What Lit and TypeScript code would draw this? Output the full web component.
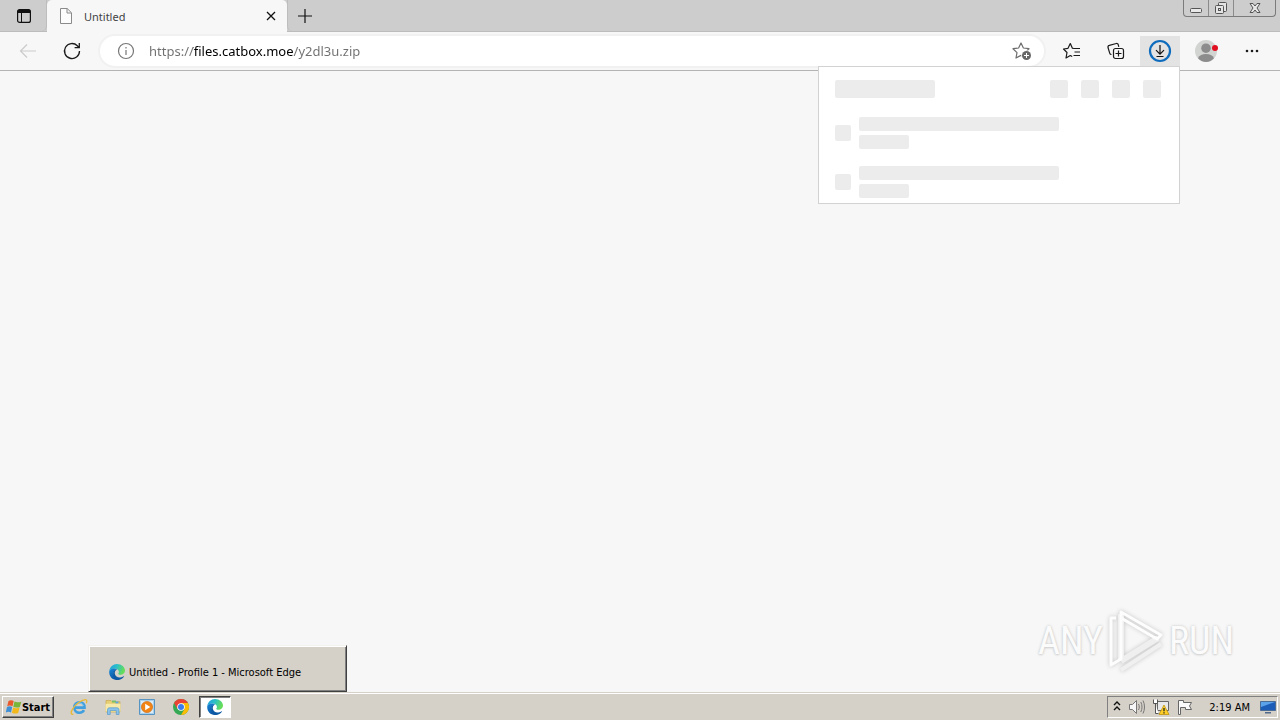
import { LitElement, html, css } from "lit";
import { customElement } from "lit/decorators.js";

const edgeLogo = (id: string) => html`<svg class="i16" viewBox="0 0 16 16" aria-hidden="true">
  <defs>
    <linearGradient id="${id}a" x1="0" y1="0" x2="1" y2="0.3">
      <stop offset="0" stop-color="#1f9be0" /><stop offset="0.5" stop-color="#2bc0c8" /><stop offset="1" stop-color="#66dd58" />
    </linearGradient>
    <linearGradient id="${id}b" x1="0" y1="0" x2="0.6" y2="1">
      <stop offset="0" stop-color="#1788d8" /><stop offset="1" stop-color="#0b4f9e" />
    </linearGradient>
  </defs>
  <path fill="url(#${id}a)" d="M.3 7C.8 3 4 0 8 0c4.600 0 8 3.200 8 6.600 0 2.500-2 4.200-4.300 4.200-1.700 0-2.500-.6-2.500-1 0-.4.7-.7.7-1.900C9.900 6 8 4.600 5.600 4.600 3.200 4.600 1.200 5.600.3 7z" />
  <path fill="url(#${id}b)" d="M.2 8.200C.2 6 2.600 4.600 5.600 4.600c1 0 2 .3 2.700.7C6 5.500 4.600 7.500 4.600 9.400c0 3.400 3.400 5.600 6.500 5 -1 .9-2 1.400-3.200 1.500C3.600 16 .2 12.500.2 8.200z" />
  <path fill="#0c59a4" d="M8 5.500C6.200 6.400 5.600 8 5.800 9.700c.4 2.700 3 4 5.500 3.700 1.400-.2 2.700-.7 3.500-1.200.3-.1.4.1.3.3-1.500 2.400-4 3.500-6.500 3.400C5 15.200 4 12 4.200 9.400 4.400 7 6 5.500 8 5.500z" />
</svg>`;

const taskIcons = {
  ie: html`<svg class="i18" viewBox="0 0 18 18" aria-hidden="true">
    <path fill="none" stroke="#3f9fdf" stroke-width="2.600" d="M4.200 9.600h10.300c0-3.300-2-5.300-5-5.300-3 0-5.200 2.200-5.200 5.200 0 3 2.200 5.200 5.200 5.200 2 0 3.600-.9 4.500-2.500" />
    <path fill="none" stroke="#8fd0f5" stroke-width=".8" d="M5 8.300c.5-2 2.200-3.300 4.300-3.300s3.600 1 4.200 2.800" />
    <path fill="none" stroke="#e8b935" stroke-width="1.300" d="M3.400 16.200C.6 17 .4 14 3 10.500 6 6 12 1.500 15.400 1.600c1.800.1 1.700 1.900.9 3.600" />
  </svg>`,
  folder: html`<svg class="i18" viewBox="0 0 18 18" aria-hidden="true">
    <path fill="#e8cf74" stroke="#c9a94a" stroke-width=".7" d="M2 2.500h5l1 1.200h8V14H2z" />
    <path fill="#79c267" d="M8 2.500h4v2H8z" /><path fill="#5fa7dd" d="M11.500 3.500h3v2h-3z" />
    <path fill="#f7e9a8" d="M1.500 5.800h15V13.500h-15z" />
    <path fill="#8cc3ea" stroke="#5799cb" stroke-width=".7" d="M3.500 16.500v-4.700c0-1.300.7-2 2-2h7.500c1.300 0 2 .7 2 2v4.700h-2.700v-4H6.200v4z" />
  </svg>`,
  player: html`<svg class="i18" viewBox="0 0 18 18" aria-hidden="true">
    <path fill="#a9d0ec" stroke="#5794c1" d="M1.500 1.500h15v15h-15z" /><path fill="#d9ecf8" d="M3 3h12v12H3z" />
    <circle cx="9" cy="9" r="5.600" fill="#f28416" stroke="#c9670d" stroke-width=".6" /><path fill="#fff" d="M7.200 5.800v6.400L12.300 9z" />
  </svg>`,
  chrome: html`<svg class="i16" viewBox="0 0 16 16" aria-hidden="true">
    <circle cx="8" cy="8" r="8" fill="#34a853" />
    <path fill="#fbbc05" d="M8 16a8 8 0 0 0 6.930-12H8l3.500 6z" />
    <path fill="#ea4335" d="M1.070 4A8 8 0 0 1 14.930 4H8L4.500 10z" />
    <circle cx="8" cy="8" r="3.800" fill="#fff" /><circle cx="8" cy="8" r="3" fill="#3b7ded" />
  </svg>`,
};

@customElement("download-flyout")
class DownloadFlyout extends LitElement {
  static styles = css`
    :host { display: block; box-sizing: border-box; background: #fff; border: 1px solid #d2d2d2; padding: 13px 18px 5px 16px; }
    .bar { background: #ececec; border-radius: 2px; }
    .head { display: flex; align-items: center; height: 18px; gap: 13px; margin-bottom: 19px; }
    .title { width: 100px; height: 18px; margin-right: auto; }
    .tool { width: 18px; height: 18px; }
    .row { display: flex; align-items: center; gap: 8px; height: 32px; }
    .row + .row { margin-top: 17px; }
    .thumb { width: 16px; height: 16px; }
    .lines { display: grid; gap: 4px; }
    .long { width: 200px; height: 14px; }
    .short { width: 50px; height: 14px; }
  `;
  render() {
    return html`
      <div class="head"><div class="bar title"></div>${[1, 2, 3, 4].map(() => html`<div class="bar tool"></div>`)}</div>
      ${[1, 2].map(() => html`<div class="row"><div class="bar thumb"></div>
        <div class="lines"><div class="bar long"></div><div class="bar short"></div></div></div>`)}
    `;
  }
}

@customElement("app-root")
class AppRoot extends LitElement {
  static styles = css`
    :host { display: flex; flex-direction: column; height: 100vh; overflow: hidden; background: #f7f7f7;
      font-family: "Noto Sans", "Open Sans", sans-serif; font-size: 11px; color: #1b1b1b; }
    * { box-sizing: border-box; }
    svg { display: block; flex: none; }
    button { border: 0; padding: 0; margin: 0; background: none; color: inherit; font: inherit;
      display: flex; align-items: center; justify-content: center; }
    .i16 { width: 16px; height: 16px; }
    .i18 { width: 18px; height: 18px; }
    .i20 { width: 20px; height: 20px; }
    .i24 { width: 24px; height: 24px; }

    .tabstrip { display: flex; height: 32px; background: #cdcdcd; border-bottom: 1px solid #bcbcbc; }
    .workspace { width: 47px; height: 31px; padding-left: 2px; border-right: 1px solid #bdbdbd; border-radius: 0 0 5px 0; }
    .tab { display: flex; align-items: center; width: 240px; height: 32px; padding: 0 8px 0 10px; gap: 9px; background: #f7f7f7; border-radius: 5px 5px 0 0; }
    .tabname { flex: 1; color: #444; }
    .tabclose { width: 16px; height: 24px; }
    .newtab { width: 34px; height: 31px; border-left: 1px solid #bdbdbd; border-radius: 0 0 0 5px; }
    .caption { display: flex; margin: 0 4px 0 auto; height: 17px; border: 1px solid #7b7b7b; border-top: 0; border-radius: 0 0 4px 4px; }
    .caption button { width: 25px; height: 16px; border-right: 1px solid #8b8b8b; }
    .caption button:last-child { width: 41px; border-right: 0; }

    .toolbar { display: flex; align-items: center; height: 39px; gap: 4px; padding: 0 8px; border-bottom: 1px solid #b4b4b4; background: #f7f7f7; }
    .tool { width: 40px; height: 30px; }
    .address { display: flex; align-items: center; flex: 1; height: 30px; margin: 0 4px; padding: 0 12px 0 16px; gap: 13px;
      background: #fff; border-radius: 15px; box-shadow: 0 0 0 2px #f1f1f1; }
    .url { flex: 1; min-width: 0; height: 24px; border: 0; padding: 0; outline: 0; font: inherit; font-size: 13px; color: #6b6b6b;
      background: linear-gradient(90deg, #6f6f6f 44px, #000 44px, #000 144px, #6f6f6f 144px);
      -webkit-background-clip: text; background-clip: text; -webkit-text-fill-color: transparent; }
    .downloads { position: relative; }
    .downloads .tool { background: #e3e3e3; }
    .flyout { position: absolute; top: 30px; right: 0; width: 362px; z-index: 2; }
    .profile, .menu { margin-left: 2px; }

    .page { flex: 1; display: flex; align-items: flex-end; justify-content: flex-end; padding: 0 46px 20px 0; }
    .mark { display: flex; align-items: center; gap: 4px; color: #fbfbfb;
      font-family: "Roboto Condensed", "Liberation Sans Narrow", "Liberation Sans", sans-serif; font-size: 38px; line-height: 64px;
      text-shadow: 0 0 3px #c8c8c8, 0 1px 2px #d8d8d8; }
    .play { width: 58px; height: 64px; filter: drop-shadow(0 0 2px #c4c4c4); }

    .taskbar { position: relative; display: flex; align-items: center; height: 27px; padding: 1px 2px; background: #d5d0c8;
      border-top: 1px solid #fff; box-shadow: 0 -1px 0 #d5d0c8; color: #000; font-family: "DejaVu Sans Condensed", "DejaVu Sans", sans-serif; }
    .start { width: 52px; height: 22px; font-weight: 700; background: #d5d0c8;
      border: 1px solid; border-color: #fff #404040 #404040 #fff; box-shadow: inset -1px -1px 0 #808080; }
    .pins { display: flex; align-items: center; margin-left: 9px; gap: 2px; }
    .pins button { width: 32px; height: 22px; }
    .pins .active { background: #fff; border: 1px solid; border-color: #404040 #fff #fff #404040; box-shadow: inset 1px 1px 0 #808080; }
    .tray { display: flex; align-items: center; height: 22px; margin-left: auto; padding: 0 0 0 4px; gap: 6px;
      border: 1px solid; border-color: #808080 #fff #fff #808080; }
    .clock { padding: 0 3px 0 9px; }
    .preview { position: absolute; left: 88px; bottom: 28px; display: flex; align-items: center; gap: 4px; width: 259px; height: 47px; padding: 7px 20px 0; background: #d5d0c8;
      border: 1px solid; border-color: #f4f2ee #404040 #404040 #f4f2ee; box-shadow: inset 1px 1px 0 #fff, inset -1px -1px 0 #808080; white-space: nowrap; }
  `;

  render() {
    return html`
      <header class="tabstrip">
        <button class="workspace" aria-label="Tab actions">
          <svg class="i16" viewBox="0 0 16 16"><rect x="1.600" y="1.600" width="12.800" height="12.800" rx="2" fill="none" stroke="#111" stroke-width="1.200" /><path fill="#111" d="M1.500 3.500a2 2 0 0 1 2-2h9a2 2 0 0 1 2 2V5h-13z" /><path stroke="#111" d="M5.500 5v9.500" /></svg>
        </button>
        <div class="tab">
          <svg class="i18" viewBox="0 0 18 18" fill="none" stroke="#8a8a8a"><path fill="#fcfcfc" d="M3.500 1.500h6.700l4.300 4.300v10.700h-11zM10 1.500V6h4.500" /></svg>
          <span class="tabname">Untitled</span>
          <button class="tabclose" aria-label="Close tab"><svg class="i16" viewBox="0 0 16 16" stroke="#111" stroke-width="1.300"><path d="m4 4 8 8M12 4l-8 8" /></svg></button>
        </div>
        <button class="newtab" aria-label="New tab"><svg class="i16" viewBox="0 0 16 16" stroke="#111" stroke-width="1.200"><path d="M1 8h14M8 1v14" /></svg></button>
        <div class="caption">
          <button aria-label="Minimize"><svg class="i16" viewBox="0 0 16 16"><rect x="2.500" y="8.500" width="11" height="4" rx="1" fill="#e8e8e8" stroke="#555" /></svg></button>
          <button aria-label="Restore"><svg class="i16" viewBox="0 0 16 16" fill="#e4e4e4" stroke="#555"><rect x="5.500" y="2.500" width="8" height="9" rx="1" /><rect x="2.500" y="5.500" width="8" height="8" rx="1" /><rect x="5.500" y="8.500" width="2" height="2" /></svg></button>
          <button aria-label="Close"><svg class="i16" viewBox="0 0 16 16"><path fill="#e8e8e8" stroke="#555" d="M3 3.500h3l2 2.500 2-2.500h3L10 8l3 4.500h-3L8 10l-2 2.500H3L6 8z" /></svg></button>
        </div>
      </header>

      <nav class="toolbar">
        <button class="tool" aria-label="Back" disabled><svg class="i20" viewBox="0 0 20 20" fill="none" stroke="#cbcbcb" stroke-width="1.200"><path d="M18 10H3M9 3.500 2.500 10 9 16.500" /></svg></button>
        <button class="tool" aria-label="Refresh"><svg class="i20" viewBox="0 0 20 20" fill="none" stroke="#1b1b1b" stroke-width="1.300"><path d="M17.500 10a7.500 7.500 0 1 1-2.200-5.300L17 6.500M17.300 2v4.700h-4.700" /></svg></button>
        <div class="address">
          <svg class="i20" viewBox="0 0 20 20" fill="none" stroke="#767676" stroke-width="1.200"><circle cx="10" cy="10" r="7.500" /><path d="M10 9v5M10 6v1.500" /></svg>
          <input class="url" type="text" aria-label="Address" value="https://files.catbox.moe/y2dl3u.zip" />
          <svg class="i20" viewBox="0 0 20 20"><path fill="none" stroke="#6e6e6e" stroke-width="1.200" stroke-linejoin="round" d="m9 2 2.400 5 5.600.7-4 3.900 1 5.400-5-2.600-5 2.600 1-5.400-4-3.900 5.600-.7z" /><circle cx="14.500" cy="14.500" r="5.200" fill="#fff" /><circle cx="14.500" cy="14.500" r="4.500" fill="#666" /><path stroke="#fff" d="M14.500 12v5M12 14.500h5" /></svg>
        </div>
        <button class="tool" aria-label="Favorites"><svg class="i20" viewBox="0 0 20 20" fill="none" stroke="#1b1b1b" stroke-width="1.200" stroke-linejoin="round"><path d="M11.500 7.500 10.400 7.200 8.300 2.600 6 7.300l-4.500.7L5 11.500l-1 5.500 4.300-2.500 1.900 1M11.500 7.500H18M12.500 11H18M11.500 14.500H18" /></svg></button>
        <button class="tool" aria-label="Collections"><svg class="i20" viewBox="0 0 20 20" fill="none" stroke="#1b1b1b" stroke-width="1.200"><path d="M5.500 13.500c-1 0-1.600-.5-1.800-1.400L2 6.500c-.2-1 .3-1.900 1.300-2.100l7-1.900c1-.2 1.800.3 2 1.300l.5 2" /><rect x="7.500" y="7.500" width="10" height="10" rx="2" /><path d="M12.500 9.500v6M9.500 12.500h6" /></svg></button>
        <div class="downloads">
          <button class="tool" aria-label="Downloads" aria-expanded="true"><svg class="i24" viewBox="0 0 24 24" fill="none" stroke="#111" stroke-width="1.200"><circle cx="12" cy="12" r="10" stroke="#0f6cbd" stroke-width="2.200" /><path d="M12 6v9M8 11.200l4 4 4-4M8.500 17.500h7" /></svg></button>
          <download-flyout class="flyout"></download-flyout>
        </div>
        <button class="tool profile" aria-label="Profile"><svg class="i24" viewBox="0 0 24 24"><circle cx="12" cy="12" r="11" fill="#d2d4d2" /><circle cx="12" cy="9.200" r="4.800" fill="#8c8c8c" /><path fill="#8c8c8c" d="M4 19.300c1.400-3 4.200-4.300 8-4.300s6.600 1.300 8 4.300c-2 2.400-5 3.700-8 3.700s-6-1.300-8-3.700z" /><circle cx="21" cy="9" r="3" fill="#e01020" /></svg></button>
        <button class="tool menu" aria-label="Settings and more"><svg class="i20" viewBox="0 0 20 20" fill="#1b1b1b"><circle cx="5" cy="10" r="1.300" /><circle cx="10" cy="10" r="1.300" /><circle cx="15" cy="10" r="1.300" /></svg></button>
      </nav>

      <main class="page">
        <div class="mark">
          <span>ANY</span>
          <svg class="play" viewBox="0 0 58 64" aria-hidden="true" fill="none" stroke-linejoin="round">
            <path stroke="#efefef" stroke-width="6" d="M14 5v47M14 52l37-23" />
            <path stroke="#f0f0f0" stroke-width="4" d="M14 61l40-26" />
            <path stroke="#fdfdfd" stroke-width="3" d="M9 9H4v47l10-6V3l40 23-4 4-36-21" />
          </svg>
          <span>RUN</span>
        </div>
      </main>

      <footer class="taskbar">
        <button class="start">
          <svg class="i16" viewBox="0 0 16 16"><path fill="#e8592b" d="M2.500 2C4.300.8 6 1 7.700 2L6.500 7.300C5 6.300 3 6.300 1.200 7.300z" /><path fill="#79b53a" d="M8.500 2.500c1.900 1 4.200 1 6.800.2l-1.500 5.200c-2.200.9-4.500.8-6.500-.2z" /><path fill="#3d8fd6" d="M1 8.100c1.800-1 3.600-1 5.200 0L5 13.500c-1.700-1-3.500-1-5.200 0z" /><path fill="#f3b81c" d="M7.200 8.500c1.900 1 4.200 1 6.400.1l-1.400 5.400c-2.200.9-4.300.7-6.300-.3z" /></svg>
          Start
        </button>
        <div class="pins">
          <button aria-label="Internet Explorer">${taskIcons.ie}</button>
          <button aria-label="File Explorer">${taskIcons.folder}</button>
          <button aria-label="Media Player">${taskIcons.player}</button>
          <button aria-label="Chrome">${taskIcons.chrome}</button>
          <button class="active" aria-label="Edge">${edgeLogo("t")}</button>
        </div>
        <div class="preview">${edgeLogo("p")}<span>Untitled - Profile 1 - Microsoft Edge</span></div>
        <div class="tray">
          <svg width="10" height="16" viewBox="0 0 10 16" fill="none" stroke="#111" stroke-width="1.400"><path d="m2 6 3-3 3 3M2 11l3-3 3 3" /></svg>
          <svg class="i18" viewBox="0 0 18 18" fill="#f6f6f6" stroke="#777"><path d="M1.500 6.500h3l4-4v13l-4-4h-3z" /><path fill="none" d="M10.500 6c1 2 1 4 0 6M12.800 4c1.600 3 1.600 7 0 10M15 2.500c2 4 2 9 0 13" /></svg>
          <svg class="i18" viewBox="0 0 18 18"><path fill="#e8e8e8" stroke="#666" d="M5.500 3.500h11v9h-11z" /><path fill="#fff" stroke="#555" d="M1.500 1.500v4h4v-4M3.500 5.500v10h3" /><path fill="#ffcf27" stroke="#b98b00" stroke-width=".7" d="m12 7 5 9.500H7z" /><path stroke="#222" stroke-width="1.300" d="M12 10v3.300M12 14.300v1.200" /></svg>
          <svg class="i18" viewBox="0 0 18 18"><path fill="#fafafa" stroke="#666" d="M2.500 16.500v-14h5v2h8l-2 3.500 2 3.500h-6v-2h-5v7z" /></svg>
          <span class="clock">2:19 AM</span>
          <svg class="i18" viewBox="0 0 18 18"><path fill="#1d5db8" stroke="#4b6c94" d="M1.500 3.500h15v9h-15z" /><path fill="#5ca2ea" d="M2 4h14L2 9z" /><path fill="#50688a" d="M6 14h6v1.500H6z" /></svg>
        </div>
      </footer>
    `;
  }
}
